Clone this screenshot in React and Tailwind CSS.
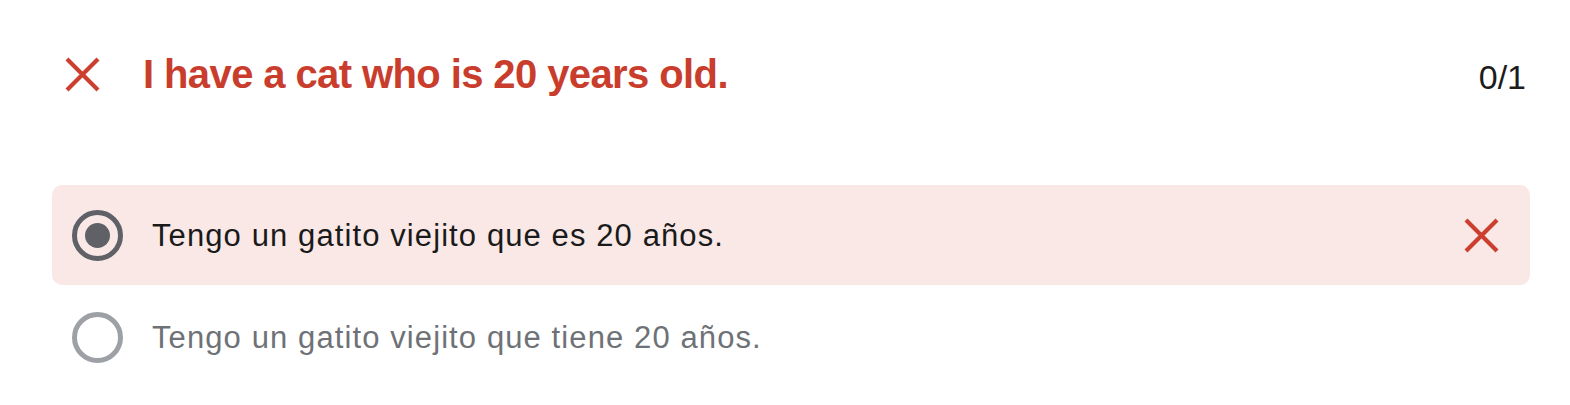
import React from "react";

function XIcon({ className }) {
  return (
    <svg viewBox="0 0 35 35" className={className} fill="none">
      <path d="M2 2 L33 33 M33 2 L2 33" stroke="#cc3e2e" strokeWidth="4.2" strokeLinecap="butt" />
    </svg>
  );
}

export default function App() {
  return (
    <div className="w-[1570px] h-[405px] bg-white pl-[52px] pr-[40px] pt-[49px]" style={{ fontFamily: '"Liberation Sans", Arial, sans-serif' }}>
      <div className="flex items-center h-[50px] pl-[13px] pr-[4px]">
        <XIcon className="w-[35px] h-[35px] shrink-0" />
        <div className="ml-[43px] text-[40px] font-bold tracking-[-0.6px] text-[#c93d2d] leading-none">
          I have a cat who is 20 years old.
        </div>
        <div className="ml-auto text-[34px] leading-none text-[#1c1c1c] pt-[6px]">0/1</div>
      </div>
      <div className="mt-[86px] flex flex-col">
        <div className="flex items-center h-[100px] rounded-[10px] bg-[#f9e8e6] pl-[20px] pr-[31px]">
          <div className="w-[51px] h-[51px] rounded-full border-[5px] border-[#5f6166] flex items-center justify-center shrink-0">
            <div className="w-[25px] h-[25px] rounded-full bg-[#5f6166]" />
          </div>
          <div className="ml-[29px] text-[31px] tracking-[1.1px] text-[#1a1a1a] leading-none">
            Tengo un gatito viejito que es 20 años.
          </div>
          <XIcon className="ml-auto w-[35px] h-[35px] shrink-0" />
        </div>
        <div className="flex items-center h-[100px] mt-[2px] pl-[20px] pr-[31px]">
          <div className="w-[51px] h-[51px] rounded-full border-[5px] border-[#9da1a6] shrink-0" />
          <div className="ml-[29px] text-[31px] tracking-[1.1px] text-[#6e7277] leading-none">
            Tengo un gatito viejito que tiene 20 años.
          </div>
        </div>
      </div>
    </div>
  );
}
